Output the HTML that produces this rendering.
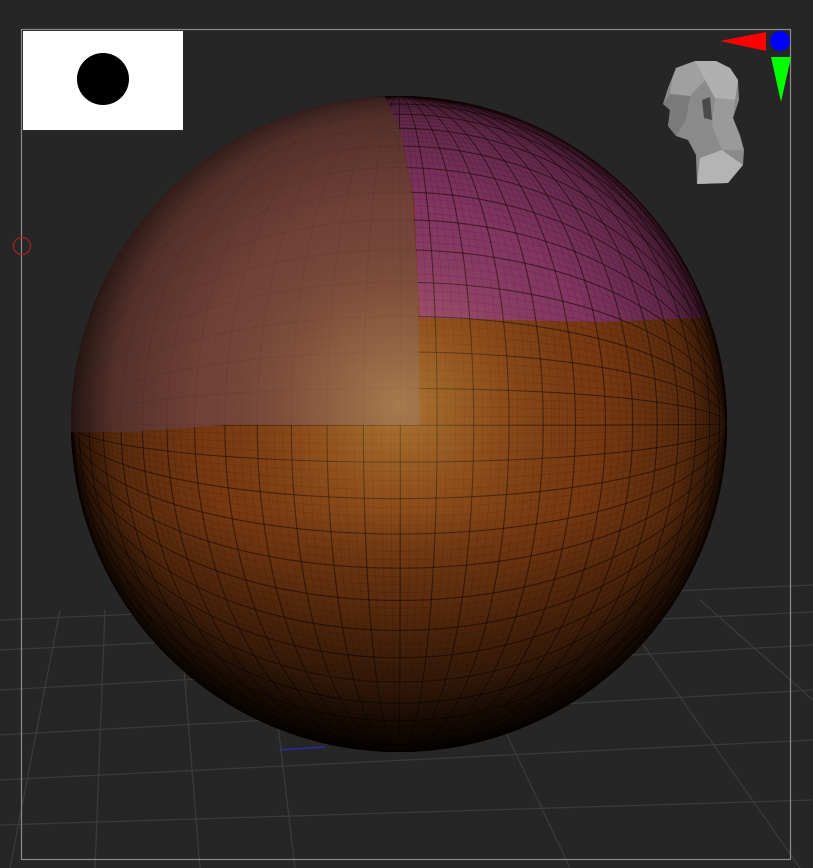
<!DOCTYPE html>
<html><head><meta charset="utf-8"><style>
html,body{margin:0;padding:0;background:#262626;width:813px;height:868px;overflow:hidden}
svg{display:block}
</style></head><body>
<svg id="s" width="813" height="868" viewBox="0 0 813 868" xmlns="http://www.w3.org/2000/svg">
<defs>
<clipPath id="sc"><circle cx="399" cy="424" r="328"/></clipPath>
<radialGradient id="hl" cx="400" cy="405" r="400" gradientUnits="userSpaceOnUse">
<stop offset="0" stop-color="#ffe070" stop-opacity="0.35"/>
<stop offset="0.25" stop-color="#ffd060" stop-opacity="0.12"/>
<stop offset="0.5" stop-color="#000" stop-opacity="0.05"/>
<stop offset="0.72" stop-color="#000" stop-opacity="0.3"/>
<stop offset="0.84" stop-color="#000" stop-opacity="0.75"/>
<stop offset="0.95" stop-color="#000" stop-opacity="0.95"/>
</radialGradient>
<linearGradient id="bt" x1="0" y1="0" x2="0" y2="1">
<stop offset="0.62" stop-color="#000" stop-opacity="0"/>
<stop offset="1" stop-color="#000" stop-opacity="0.7"/>
</linearGradient>
</defs>
<g id="floor" stroke="#3a3a3a" stroke-width="1.3" fill="none">
<path d="M0 620 L813 585"/><path d="M0 650 L813 612"/><path d="M0 690 L813 645"/>
<path d="M0 735 L813 690"/><path d="M0 780 L813 740"/><path d="M0 825 L813 800"/>
<path d="M60 610 L10 868"/><path d="M105 610 L95 868"/><path d="M180 620 L200 868"/>
<path d="M275 700 L295 868"/><path d="M500 720 L570 868"/><path d="M640 640 L800 868"/>
<path d="M700 600 L813 700"/>
</g>
<rect x="21.5" y="29.5" width="769" height="830" fill="none" stroke="#8a8a8a" stroke-width="1.2"/>
<g clip-path="url(#sc)">
<rect x="60" y="90" width="680" height="680" fill="#7e3c12"/>
<path d="M380 90 L740 90 L740 318 L700 318 L600 322 L420 318 L418 290 L414 200 L400 130 Z" fill="#8a3868"/>
<g id="grid" fill="none" stroke="#1a0800"></g>
<path d="M60 90 L382 90 L400 130 L413 200 L418 290 L420 425 L225 425 L130 432 L60 432 Z" fill="#764642" fill-opacity="0.85"/>
<circle cx="399" cy="424" r="330" fill="url(#hl)"/>
<rect x="60" y="90" width="680" height="680" fill="url(#bt)"/>
</g>
<path d="M280 750 L325 747" stroke="#2a2aa0" stroke-width="1.5"/>
<rect x="23" y="31" width="160" height="99" fill="#fff"/>
<circle cx="103" cy="79" r="26" fill="#000"/>
<circle cx="22" cy="246" r="8.5" fill="none" stroke="#a02020" stroke-width="1.3"/>
<polygon points="720,41 766,32 766,51" fill="#ff0000"/>
<circle cx="780" cy="41" r="10" fill="#0000ff"/>
<polygon points="771,57 791,57 781,102" fill="#00ff00"/>
<g>
<path d="M676 68 L695 61 L716 61 L730 68 L738 80 L739 100 L733 118 L740 135 L744 150 L743 165 L728 183 L697 184 L696 155 L688 140 L676 136 L668 126 L670 110 L663 104 L668 88 Z" fill="#8a8a8a"/>
<path d="M695 61 L716 61 L730 68 L738 80 L735 100 L715 98 L705 80 Z" fill="#b0b0b0"/>
<path d="M676 68 L695 61 L705 80 L690 96 L670 94 L672 80 Z" fill="#a0a0a0"/>
<path d="M670 94 L690 96 L686 120 L676 136 L668 126 L670 110 L663 104 Z" fill="#7a7a7a"/>
<path d="M715 98 L735 100 L733 118 L744 150 L722 150 L712 125 Z" fill="#9a9a9a"/>
<path d="M697 184 L728 183 L743 165 L722 150 L700 158 Z" fill="#b4b4b4"/>
<path d="M702 100 L710 97 L712 120 L704 118 Z" fill="#4a4a4a"/>
</g>
</svg>
<script>
(function(){
var g=document.getElementById('grid'),cx=399,cy=424,R=328,out='';
var st=(37/328)/4;
for(var i=-56;i<=56;i++){
 var phi=i*st+0.004; if(Math.abs(phi)>=Math.PI/2) continue;
 var op=(i%4==0)?0.6:0.18, w=(i%4==0)?1.1:0.6;
 var r=Math.abs(R*Math.sin(phi)).toFixed(1), s=phi>=0?1:0;
 out+='<path d="M'+cx+' '+(cy-R)+' A'+r+' '+R+' 0 0 '+s+' '+cx+' '+(cy+R)+'" stroke-opacity="'+op+'" stroke-width="'+w+'"/>';
 out+='<path d="M'+(cx-R)+' '+cy+' A'+R+' '+r+' 0 0 '+(1-s)+' '+(cx+R)+' '+cy+'" stroke-opacity="'+op+'" stroke-width="'+w+'"/>';
}
g.innerHTML=out;
})();
</script>
</body></html>
